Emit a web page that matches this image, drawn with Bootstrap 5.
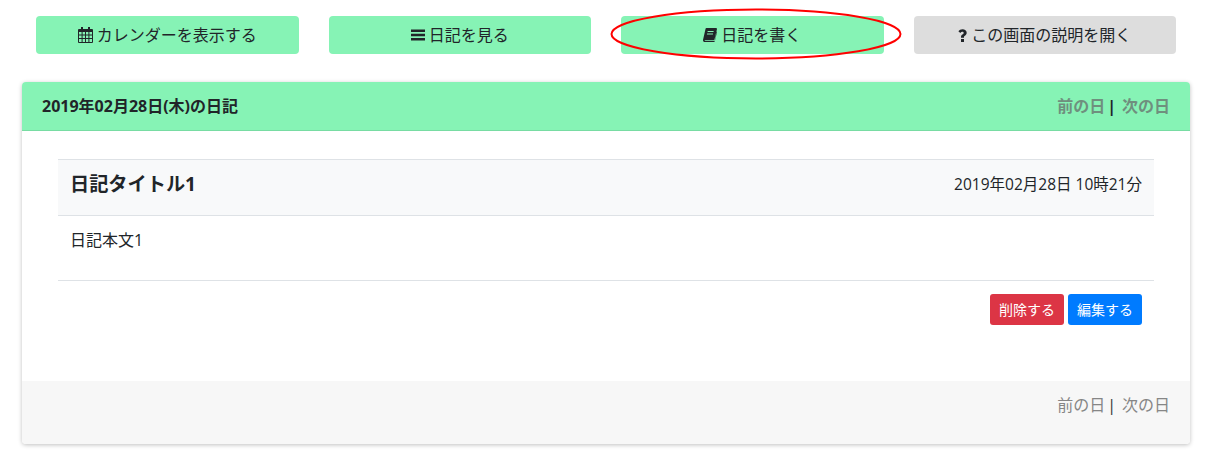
<!DOCTYPE html>
<html lang="ja">

<head>
    <meta charset="UTF-8">
    <meta name="viewport" content="width=device-width, initial-scale=1.0">
    <title>日記</title>
    <link href="https://cdn.jsdelivr.net/npm/bootstrap@5.3.3/dist/css/bootstrap.min.css" rel="stylesheet">
    <style>
        body {
            font-family: "Open Sans", "Noto Sans CJK JP", sans-serif;
            font-size: 16px;
            color: #212529;
            background: #fff;
        }

        .page-wrap {
            position: relative;
            padding: 16px 16px 8px 21px;
        }

        .menu-row {
            display: grid;
            grid-template-columns: repeat(4, 1fr);
            margin-bottom: 28px;
        }

        .menu-cell {
            padding: 0 15px;
        }

        .menu-btn {
            display: flex;
            align-items: center;
            justify-content: center;
            gap: 4px;
            width: 100%;
            height: 38px;
            padding: 0;
            border: 0;
            border-radius: 4px;
            font-size: 16px;
            color: #212529;
            background: #86f3b5;
        }

        .menu-btn:hover {
            color: #212529;
            background: #86f3b5;
        }

        .menu-btn.help-btn,
        .menu-btn.help-btn:hover {
            background: #dddddd;
        }

        .menu-icon {
            flex: none;
            fill: #212529;
        }

        .write-ring {
            position: absolute;
            left: 610px;
            top: 8px;
            pointer-events: none;
        }

        .diary-card {
            margin: 0 1px;
            border: 0;
            border-radius: 4px;
            box-shadow: 0 1px 4px rgba(0, 0, 0, .25);
            overflow: hidden;
        }

        .diary-head {
            display: flex;
            justify-content: space-between;
            align-items: center;
            height: 49px;
            padding: 0 20px;
            font-weight: 700;
            font-size: 16px;
            background: #86f3b5;
            border-bottom: 1px solid #78dca3;
        }

        .day-links a {
            color: #6f8f7e;
            text-decoration: none;
        }

        .day-sep {
            margin: 0 6px 0 2px;
        }

        .diary-body {
            height: 250px;
            padding: 28px 36px 0;
        }

        .entry-head {
            display: flex;
            justify-content: space-between;
            align-items: center;
            height: 57px;
            padding: 0 12px 6px;
            background: #f8f9fa;
            border-top: 1px solid #dee2e6;
            border-bottom: 1px solid #dee2e6;
        }

        .entry-title {
            margin: 0 0 2px;
            font-size: 19.2px;
            font-weight: 700;
        }

        .entry-date {
            font-size: 15.5px;
        }

        .entry-text {
            height: 65px;
            padding: 12px 12px 0;
            font-size: 16px;
            border-bottom: 1px solid #dee2e6;
        }

        .entry-actions {
            display: flex;
            justify-content: flex-end;
            gap: 4px;
            padding: 13px 12px 0;
        }

        .entry-btn {
            width: 74px;
            height: 31px;
            padding: 0;
            font-size: 14px;
            border-radius: 3px;
            color: #fff;
        }

        .btn-remove,
        .btn-remove:hover {
            color: #fff;
            background: #dc3545;
        }

        .btn-edit,
        .btn-edit:hover {
            color: #fff;
            background: #007bff;
        }

        .diary-foot {
            display: flex;
            justify-content: flex-end;
            height: 63px;
            padding: 12px 20px 0;
            background: #f7f7f7;
            color: #333;
        }

        .diary-foot a {
            color: #868686;
            text-decoration: none;
        }
    </style>
</head>

<body>

    <div class="page-wrap">
        <div class="menu-row">
            <div class="menu-cell">
                <a class="btn menu-btn" href="#">
                    <svg class="menu-icon" width="15" height="16" viewBox="0 0 15 16">
                        <path fill-rule="evenodd" d="M3 0h2v2h5V0h2v2h2a1 1 0 0 1 1 1v12a1 1 0 0 1-1 1H1a1 1 0 0 1-1-1V3a1 1 0 0 1 1-1h2zM1 5v2.5h2.6V5zm3.6 0v2.500h2.400V5zm3.400 0v2.500h2.400V5zm3.400 0v2.500H14V5zM1 8.500V11h2.600V8.500zm3.600 0V11h2.400V8.500zm3.400 0V11h2.400V8.500zm3.400 0V11H14V8.500zM1 12v3h2.600v-3zm3.600 0v3h2.400v-3zm3.400 0v3h2.400v-3zm3.400 0v3H14v-3z"/>
                    </svg>
                    カレンダーを表示する
                </a>
            </div>
            <div class="menu-cell">
                <a class="btn menu-btn" href="#">
                    <svg class="menu-icon" width="14" height="12" viewBox="0 0 14 12">
                        <rect y="0.500" width="14" height="2.500"/>
                        <rect y="4.750" width="14" height="2.500"/>
                        <rect y="9" width="14" height="2.500"/>
                    </svg>
                    日記を見る
                </a>
            </div>
            <div class="menu-cell">
                <a class="btn menu-btn" href="#">
                    <svg class="menu-icon" width="14" height="14" viewBox="0 0 14 14">
                        <path fill-rule="evenodd" d="M3.500 0H13a1 1 0 0 1 1 1L11.500 11.500a1 1 0 0 1-1 .8H2.500c-.8 0-1 .5-.8.800h10L13.500 3.500l.5.500-2.200 9.300a1 1 0 0 1-1 .7H1.800C.6 14-.3 12.800.1 11.500L2.500.9A1 1 0 0 1 3.500 0zM4.700 3l-.2 1h6l.2-1zm-.6 2.500-.2 1h6l.2-1z"/>
                    </svg>
                    日記を書く
                </a>
            </div>
            <div class="menu-cell">
                <a class="btn menu-btn help-btn" href="#">
                    <svg class="menu-icon" width="9" height="13" viewBox="0 0 9 13">
                        <path d="M3 10h3v3H3zM3 8.700V8c0-1.500.8-2.200 1.700-2.800.6-.4 1-.7 1-1.300 0-.7-.6-1.100-1.400-1.100-.8 0-1.400.4-2 1.100L.4 2.300C1.300 1 2.700.2 4.500.2 6.800.2 8.700 1.500 8.700 3.800c0 1.600-.9 2.300-1.800 2.900-.6.400-.9.700-.9 1.200v.8z"/>
                    </svg>
                    この画面の説明を開く
                </a>
            </div>
        </div>

        <svg class="write-ring" width="292" height="52" viewBox="0 0 292 52">
            <ellipse cx="146" cy="26" rx="144.500" ry="24.500" fill="none" stroke="#ff0000" stroke-width="2"/>
        </svg>

        <div class="card diary-card">
            <div class="diary-head">
                <span>2019年02月28日(木)の日記</span>
                <span class="day-links"><a href="#">前の日</a><span class="day-sep">|</span><a href="#">次の日</a></span>
            </div>
            <div class="diary-body">
                <div class="entry-head">
                    <h5 class="entry-title">日記タイトル1</h5>
                    <span class="entry-date">2019年02月28日 10時21分</span>
                </div>
                <div class="entry-text">日記本文1</div>
                <div class="entry-actions">
                    <button class="btn entry-btn btn-remove">削除する</button>
                    <button class="btn entry-btn btn-edit">編集する</button>
                </div>
            </div>
            <div class="diary-foot">
                <span><a href="#">前の日</a><span class="day-sep">|</span><a href="#">次の日</a></span>
            </div>
        </div>
    </div>

    <script src="https://cdn.jsdelivr.net/npm/bootstrap@5.3.3/dist/js/bootstrap.bundle.min.js"></script>
</body>

</html>
